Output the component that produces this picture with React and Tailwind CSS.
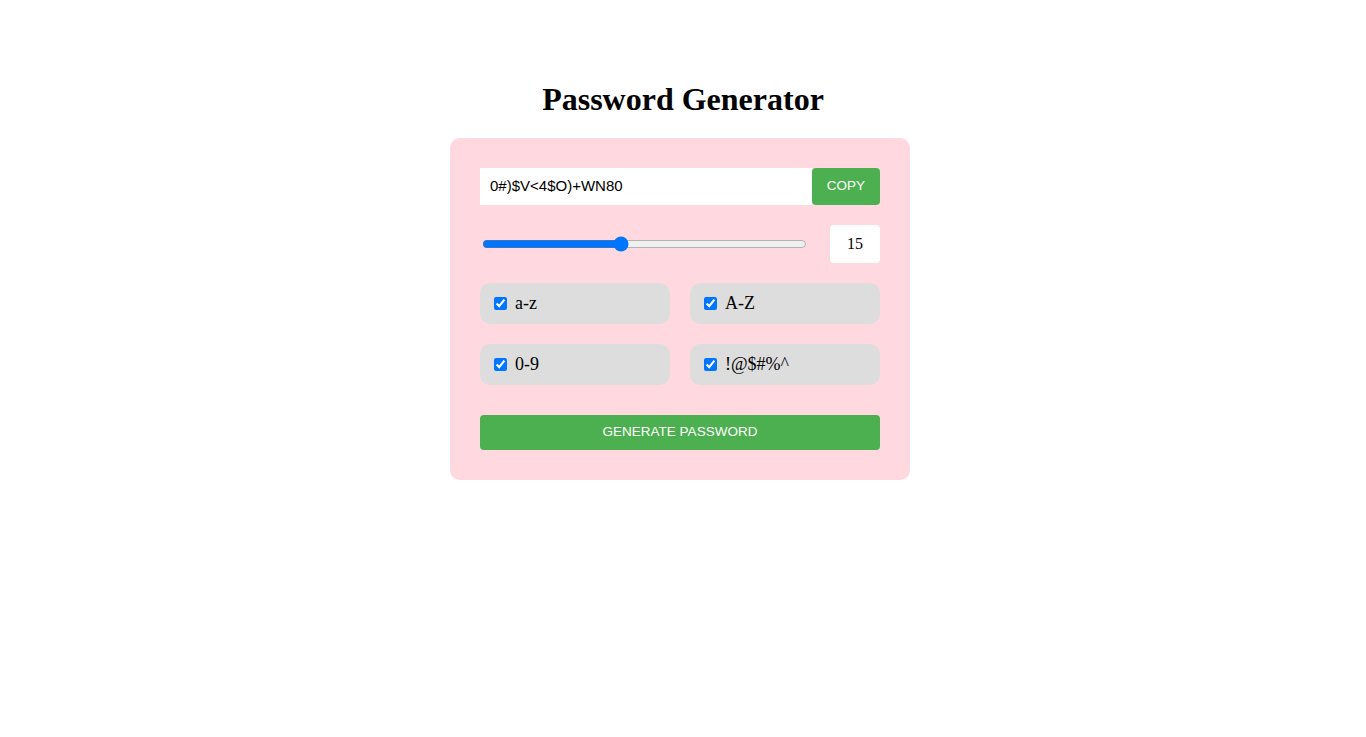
import React, { useState } from 'react';

// Password generator card: output row, length slider, charset toggles, generate button
const OPTIONS = [
  { key: 'lower', label: 'a-z' },
  { key: 'upper', label: 'A-Z' },
  { key: 'digits', label: '0-9' },
  { key: 'symbols', label: '!@$#%^' },
];

const App = () => {
  const [length, setLength] = useState(15);
  const [password] = useState('0#)$V<4$O)+WN80');
  const [checked, setChecked] = useState({ lower: true, upper: true, digits: true, symbols: true });

  return (
    <div className="min-h-[737px] bg-white pt-[81px] font-['Liberation_Serif',serif] text-black">
      <h1 className="text-center text-[32px] font-bold leading-[37px] mb-[20px]">Password Generator</h1>

      <div className="flex justify-center pr-[6px]">
        <div className="w-[460px] rounded-[10px] bg-[#ffd9df] p-[30px]">
          {/* Output + copy */}
          <div className="flex h-[37px]">
            <input
              readOnly
              value={password}
              className="flex-1 min-w-0 bg-white px-[10px] text-[15px] font-['Liberation_Sans',Arial,sans-serif] outline-none"
            />
            <button className="w-[68px] rounded-[4px] bg-[#4caf50] text-[13.5px] text-white font-['Liberation_Sans',Arial,sans-serif]">
              COPY
            </button>
          </div>

          {/* Length slider */}
          <div className="mt-[20px] flex items-center justify-between h-[38px]">
            <input
              type="range"
              min={4}
              max={30}
              value={length}
              onChange={(e) => setLength(Number(e.target.value))}
              className="ml-[2px] w-[325px] accent-[#0075ff]"
            />
            <div className="flex h-[38px] w-[50px] items-center justify-center rounded-[4px] bg-white text-[16px]">
              {length}
            </div>
          </div>

          {/* Character sets */}
          <div className="mt-[20px] grid grid-cols-2 gap-[20px]">
            {OPTIONS.map((o) => (
              <label
                key={o.key}
                className="flex h-[41px] items-center rounded-[10px] bg-[#dddddd] pl-[14px] text-[18px]"
              >
                <input
                  type="checkbox"
                  checked={checked[o.key]}
                  onChange={() => setChecked({ ...checked, [o.key]: !checked[o.key] })}
                  className="h-[13px] w-[13px] accent-[#0075ff]"
                />
                <span className="ml-[8px]">{o.label}</span>
              </label>
            ))}
          </div>

          <button className="mt-[30px] h-[35px] w-full rounded-[4px] bg-[#4caf50] text-[13.5px] text-white font-['Liberation_Sans',Arial,sans-serif]">
            GENERATE PASSWORD
          </button>
        </div>
      </div>
    </div>
  );
};

export default App;
